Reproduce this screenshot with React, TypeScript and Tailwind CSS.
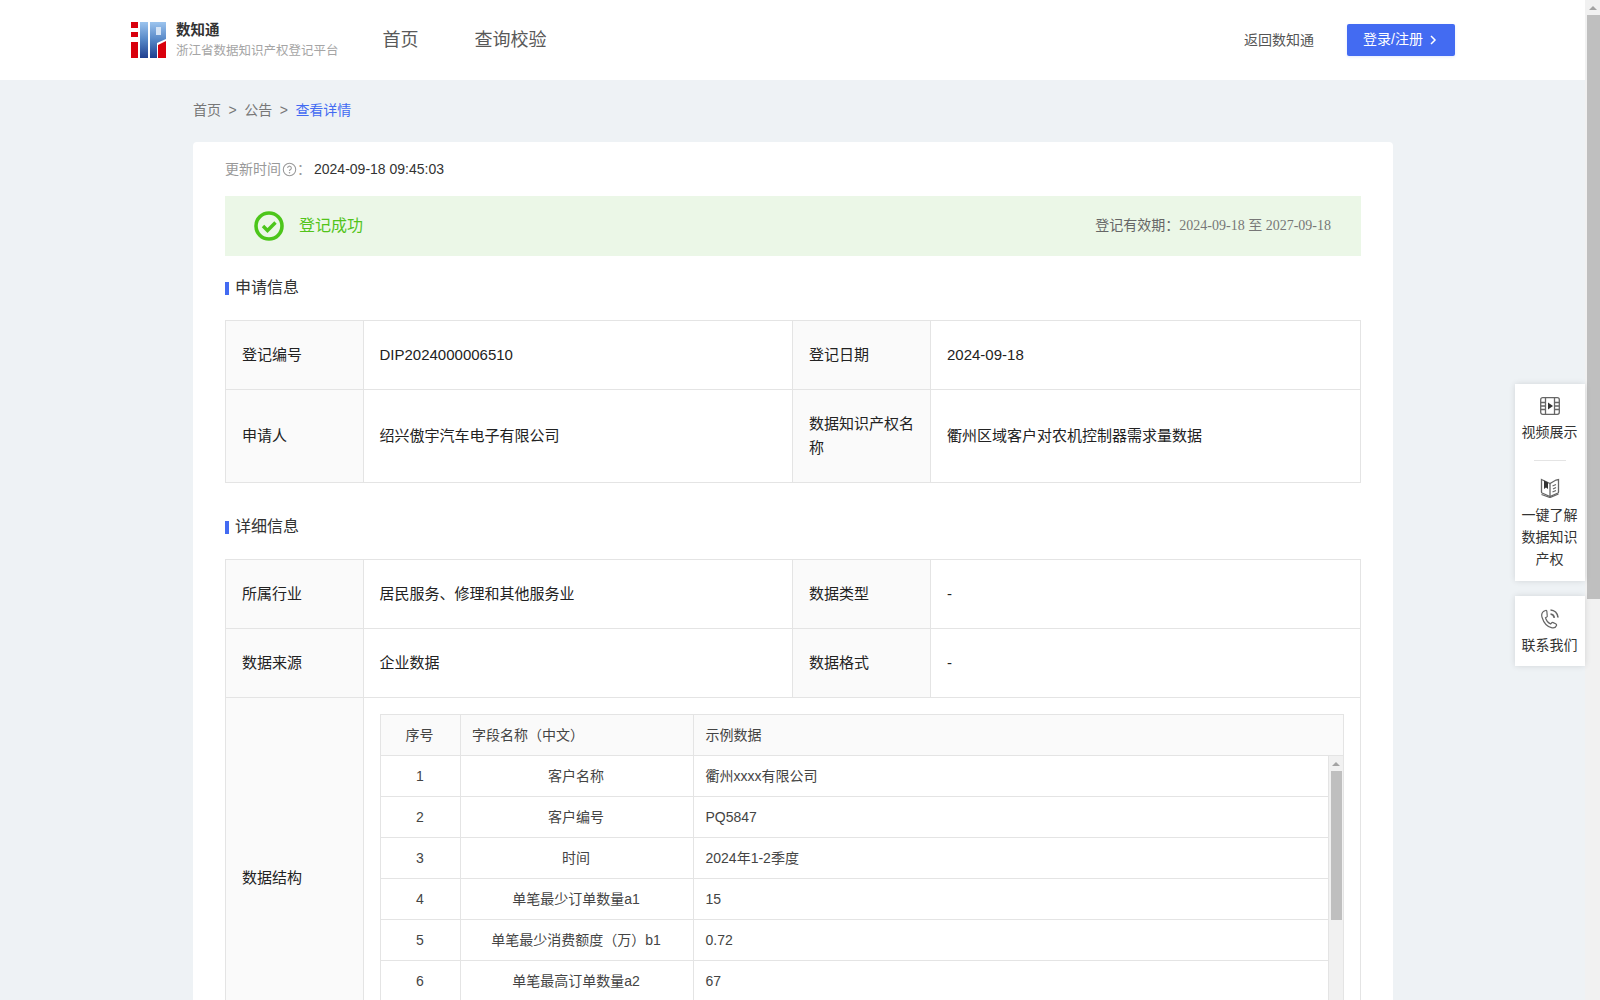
const sans = "font-['Liberation_Sans','Noto_Sans_CJK_SC',sans-serif]";

function Logo() {
  return (
    <svg width="35" height="36" viewBox="0 0 35 36" className="shrink-0">
      <defs>
        <linearGradient id="lg" gradientUnits="userSpaceOnUse" x1="0" y1="0" x2="0" y2="36">
          <stop offset="0" stopColor="#9cc4ee" />
          <stop offset="0.5" stopColor="#5586c6" />
          <stop offset="1" stopColor="#1f3f8f" />
        </linearGradient>
      </defs>
      <rect x="0" y="0" width="7" height="6" fill="#d9000d" />
      <rect x="0" y="10" width="7" height="5" fill="#d9000d" />
      <rect x="0" y="20" width="7" height="16" fill="#d9000d" />
      <rect x="9" y="0" width="8" height="36" fill="url(#lg)" />
      <path d="M19 0h16v17l-9 4v15h-7z" fill="url(#lg)" />
      <rect x="25" y="5" width="5" height="8" fill="#d5e4f6" />
      <path d="M27 23l8-4v17h-8z" fill="#d9000d" />
    </svg>
  );
}

function Th({ children }: { children: React.ReactNode }) {
  return (
    <td className="border border-[#e4e4e4] bg-[#fafafa] px-[16px] py-[12px] text-[15px] leading-[24px] text-[#222]">
      {children}
    </td>
  );
}

function Td({ children }: { children: React.ReactNode }) {
  return (
    <td className="border border-[#e4e4e4] px-[16px] py-[12px] text-[15px] leading-[24px] text-[#222]">
      {children}
    </td>
  );
}

function TdFirst({ children }: { children: React.ReactNode }) {
  return (
    <td className="border border-[#e4e4e4] pl-[15.5px] pr-[16px] py-[12px] text-[15px] leading-[24px] text-[#222]">
      {children}
    </td>
  );
}

function Heading({ children }: { children: React.ReactNode }) {
  return (
    <div className="flex items-center h-[20px] text-[16px] text-[#333]">
      <span className="w-[4px] h-[13px] bg-[#436bf2] mr-[6px] mt-[2px]" />
      <span className="mt-[1px]">{children}</span>
    </div>
  );
}

const rows = [
  ["1", "客户名称", "衢州xxxx有限公司"],
  ["2", "客户编号", "PQ5847"],
  ["3", "时间", "2024年1-2季度"],
  ["4", "单笔最少订单数量a1", "15"],
  ["5", "单笔最少消费额度（万）b1", "0.72"],
  ["6", "单笔最高订单数量a2", "67"],
];

function Rail({ icon, children }: { icon: React.ReactNode; children: React.ReactNode }) {
  return (
    <div className="flex flex-col items-center text-center text-[14px] leading-[22px] text-[#333]">
      {icon}
      <div className="w-[56px] mt-[6px] mr-[1px]">{children}</div>
    </div>
  );
}

export default function App() {
  return (
    <div className={"h-[1000px] overflow-hidden flex bg-[#eef2f5] " + sans}>
      <div className="flex-1 min-w-0 relative">
        <header className="h-[80px] bg-white flex items-center pl-[131px] pr-[130px]">
          <Logo />
          <div className="ml-[10px] mt-[-1px]">
            <div className="text-[14.5px] leading-[20px] font-bold text-[#333]">数知通</div>
            <div className="text-[12.5px] leading-[18px] mt-[2px] text-[#a5a5a5]">浙江省数据知识产权登记平台</div>
          </div>
          <nav className="flex gap-[56px] ml-[44px] text-[18px] text-[#595959]">
            <span>首页</span>
            <span>查询校验</span>
          </nav>
          <div className="ml-auto text-[14px] text-[#555]">返回数知通</div>
          <button className="ml-[33px] w-[108px] h-[32px] pb-[1px] pr-[2px] bg-[#436bf2] rounded-[2px] text-white text-[14px] flex items-center justify-center gap-[6px] shadow-[0_1px_3px_rgba(67,107,242,0.15)]">
            登录/注册
            <svg width="8" height="12" viewBox="0 0 8 12" fill="none" stroke="white" strokeWidth="1.5"><path d="M2 2l4 4-4 4" /></svg>
          </button>
        </header>

        <main className="w-[1200px] ml-[193px]">
          <div className="h-[62px] pb-[1px] flex items-center text-[14px] text-[#777]">
            <span>首页</span>
            <span className="mx-[7.5px]">&gt;</span>
            <span>公告</span>
            <span className="mx-[7.5px]">&gt;</span>
            <span className="text-[#436bf2]">查看详情</span>
          </div>
          <div className="bg-white rounded-[4px] px-[32px] pb-[32px]">
            <div className="h-[54px] flex items-center text-[14px]">
              <span className="text-[#999]">更新时间</span>
              <svg width="15" height="15" viewBox="0 0 14 14" fill="none" className="ml-[1px]">
                <circle cx="7" cy="7" r="5.8" stroke="#999" strokeWidth="1" />
                <path d="M5.3 5.6a1.7 1.7 0 1 1 2.6 1.4c-.6.4-.9.7-.9 1.3" stroke="#999" strokeWidth="1" />
                <circle cx="7" cy="10" r="0.7" fill="#999" />
              </svg>
              <span className="text-[#999]">：</span>
              <span className="text-[#333] ml-[3px]">2024-09-18 09:45:03</span>
            </div>
            <div className="h-[60px] bg-[#ebf7e7] flex items-center pl-[29px] pr-[30px]">
              <svg width="30" height="30" viewBox="0 0 30 30" fill="none">
                <circle cx="15" cy="15" r="13" stroke="#4cc61a" strokeWidth="3.6" />
                <path d="M9 15l4.500 4.500 8-8" stroke="#4cc61a" strokeWidth="3.4" />
              </svg>
              <span className="ml-[15px] mb-[1px] text-[16px] text-[#52c41a]">登记成功</span>
              <span className="ml-auto mb-[2px] text-[14px] text-[#666]">
                登记有效期：<span className="font-['Liberation_Serif','Noto_Sans_CJK_SC',serif] text-[#777]">2024-09-18 至 2027-09-18</span>
              </span>
            </div>

            <div className="mt-[21px] mb-[23px]"><Heading>申请信息</Heading></div>
            <table className="w-[1135px] border-collapse table-fixed">
              <colgroup>
                <col className="w-[138px]" />
                <col className="w-[429px]" />
                <col className="w-[138px]" />
                <col className="w-[430px]" />
              </colgroup>
              <tbody>
                <tr className="h-[69px]">
                  <Th>登记编号</Th><TdFirst>DIP2024000006510</TdFirst><Th>登记日期</Th><Td>2024-09-18</Td>
                </tr>
                <tr className="h-[93px]">
                  <Th>申请人</Th><TdFirst>绍兴傲宇汽车电子有限公司</TdFirst><Th>数据知识产权名称</Th><Td>衢州区域客户对农机控制器需求量数据</Td>
                </tr>
              </tbody>
            </table>

            <div className="mt-[33px] mb-[23px]"><Heading>详细信息</Heading></div>
            <table className="w-[1135px] border-collapse table-fixed">
              <colgroup>
                <col className="w-[138px]" />
                <col className="w-[429px]" />
                <col className="w-[138px]" />
                <col className="w-[430px]" />
              </colgroup>
              <tbody>
                <tr className="h-[69px]">
                  <Th>所属行业</Th><TdFirst>居民服务、修理和其他服务业</TdFirst><Th>数据类型</Th><Td>-</Td>
                </tr>
                <tr className="h-[69px]">
                  <Th>数据来源</Th><TdFirst>企业数据</TdFirst><Th>数据格式</Th><Td>-</Td>
                </tr>
                <tr>
                  <Th>数据结构</Th>
                  <td colSpan={3} className="border border-[#e4e4e4] p-[16px]">
                    <div className="border border-[#e4e4e4] text-[14px] text-[#444]">
                      <div className="flex h-[41px] bg-[#fafafa] border-b border-[#e4e4e4] items-center">
                        <div className="w-[80px] pr-[2px] text-center border-r border-[#e4e4e4] h-full flex items-center justify-center shrink-0">序号</div>
                        <div className="w-[233px] pl-[11px] border-r border-[#e4e4e4] h-full flex items-center shrink-0">字段名称（中文）</div>
                        <div className="pl-[11.5px]">示例数据</div>
                      </div>
                      <div className="flex h-[284px]">
                        <div className="flex-1">
                          {rows.map((r) => (
                            <div key={r[0]} className="flex h-[41px] border-b border-[#e4e4e4] items-center">
                              <div className="w-[80px] pr-[1px] text-center border-r border-[#e4e4e4] h-full flex items-center justify-center shrink-0">{r[0]}</div>
                              <div className="w-[233px] pr-[2px] text-center border-r border-[#e4e4e4] h-full flex items-center justify-center shrink-0">{r[1]}</div>
                              <div className="pl-[11.5px]">{r[2]}</div>
                            </div>
                          ))}
                        </div>
                        <div className="w-[15px] bg-[#f1f1f1] border-l border-[#e4e4e4] pt-[6px] shrink-0 flex flex-col items-center">
                          <div className="w-0 h-0 border-x-[4px] border-x-transparent border-b-[4px] border-b-[#a3a3a3]" />
                          <div className="w-[11px] h-[149px] mt-[5px] bg-[#bfbfbf]" />
                        </div>
                      </div>
                    </div>
                  </td>
                </tr>
              </tbody>
            </table>
          </div>
        </main>

        <div className="absolute right-0 top-[384px] w-[70px] flex flex-col gap-[15px]">
          <div className="bg-white shadow-[0_0_6px_rgba(0,0,0,0.12)] pt-[13px] pb-[11px] flex flex-col items-center">
            <Rail icon={
              <svg width="20" height="18" viewBox="0 0 20 18" fill="none" stroke="#666" strokeWidth="1.3">
                <rect x="0.7" y="0.7" width="18.6" height="16.6" rx="2" />
                <path d="M5.500 1v16M14.500 1v16M1 5.500h4.500M1 9h4.500M1 12.500h4.500M14.500 5.500h4.500M14.500 9h4.500M14.500 12.500h4.500" />
                <path d="M8 5.500v7l5-3.500z" fill="#333" stroke="none" />
              </svg>
            }>视频展示</Rail>
            <div className="w-[32px] h-px bg-[#e4e4e4] mt-[17px] mb-[17px]" />
            <Rail icon={
              <svg width="20" height="20" viewBox="0 0 20 20" fill="none" stroke="#666" strokeWidth="1.3">
                <path d="M1.500 1.500L10 5.500l6-3.500 2.500-.5v12.500c0 .5-.2.800-.6 1L10 18.500l-7.900-3.500c-.4-.2-.6-.5-.6-1z" />
                <path d="M10 5.500v13M12.500 8l3.500-1.500M13 11l3-1.500M12.500 14l3.500-1.500M1.500 16.500l8.500 3 8.500-3.500" />
                <path d="M4 2.500l4 2v6.500l-2-1.500-2 1.500z" fill="#333" stroke="none" />
              </svg>
            }>一键了解数据知识产权</Rail>
          </div>
          <div className="bg-white shadow-[0_0_6px_rgba(0,0,0,0.12)] pt-[13px] pb-[10px] flex flex-col items-center">
            <Rail icon={
              <svg width="20" height="20" viewBox="0 0 20 20" fill="none" stroke="#666" strokeWidth="1.2">
                <path d="M5.500 1.500c-3 1-4.500 3.500-3.400 7 1.400 4.500 5 9 9.300 10.200 2.300.6 4.400-.3 5.100-2.200.3-.8-.2-1.300-.9-1.700l-2.400-1.200c-.7-.3-1.200-.2-1.700.4l-.9 1c-2.400-1.200-4.400-3.700-5.100-6.200l1.200-.7c.6-.4.800-1 .5-1.700L6.800 2c-.3-.6-.7-.8-1.300-.5z" />
                <path d="M10.500 1c3.800.2 7 3.200 7.500 7.500M10.500 5c2 .2 3.500 1.600 3.800 3.800" strokeWidth="1.700" />
              </svg>
            }>
              <div className="mt-[-1px]">联系我们</div>
            </Rail>
          </div>
        </div>
      </div>

      <div className="w-[15px] shrink-0 bg-[#f1f1f1] flex flex-col pt-[6px]">
        <div className="w-0 h-0 self-center border-x-[4px] border-x-transparent border-b-[4px] border-b-[#a3a3a3]" />
        <div className="w-[13px] h-[584px] mt-[5px] self-end bg-[#bfbfbf]" />
      </div>
    </div>
  );
}
